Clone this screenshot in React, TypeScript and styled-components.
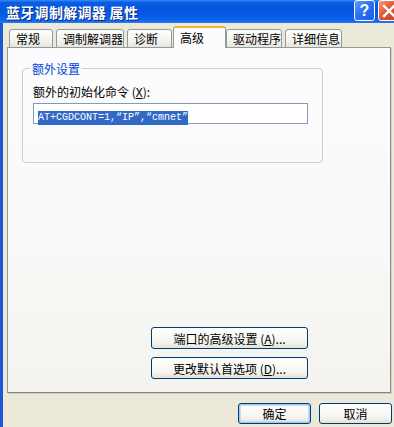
import styled, { createGlobalStyle } from 'styled-components';

const GlobalStyle = createGlobalStyle`
  html, body {
    margin: 0;
    padding: 0;
    background: #ece9d8;
  }
  body {
    font-family: "Noto Sans CJK SC", "Liberation Sans", sans-serif;
    font-size: 12px;
  }
`

const tabs = [
  { label: '常规', width: 44 },
  { label: '调制解调器', width: 68 },
  { label: '诊断', width: 45 },
  { label: '高级', width: 53, active: true },
  { label: '驱动程序', width: 56 },
  { label: '详细信息', width: 57 },
]

function App() {
  return (
    <>
      <GlobalStyle />
      <Window>
        <TitleBar>
          <TitleText>蓝牙调制解调器 属性</TitleText>
          <TitleButtons>
            <HelpBtn>?</HelpBtn>
            <CloseBtn>
              <svg width="14" height="14" viewBox="0 0 14 14">
                <path d="M2 2 L12 12 M12 2 L2 12" stroke="#fff" strokeWidth="2.4" strokeLinecap="square" />
              </svg>
            </CloseBtn>
          </TitleButtons>
        </TitleBar>
        <Frame>
          <Body>
            <TabStrip>
              {tabs.map((t) => (
                <Tab key={t.label} $active={!!t.active} $width={t.width}>
                  {t.label}
                </Tab>
              ))}
            </TabStrip>
            <Panel>
              <GroupBox>
                <Legend>额外设置</Legend>
                <FieldLabel>
                  额外的初始化命令 (<u>X</u>):
                </FieldLabel>
                <TextBox>
                  <Selected>AT+CGDCONT=1,“IP”,“cmnet”</Selected>
                </TextBox>
              </GroupBox>
              <ButtonColumn>
                <WideButton>
                  端口的高级设置 (<u>A</u>)...
                </WideButton>
                <WideButton>
                  更改默认首选项 (<u>D</u>)...
                </WideButton>
              </ButtonColumn>
            </Panel>
            <DialogButtons>
              <DlgButton $default>确定</DlgButton>
              <DlgButton>取消</DlgButton>
            </DialogButtons>
          </Body>
        </Frame>
      </Window>
    </>
  )
}

export default App;

const Window = styled.div`
  width: 394px;
  height: 427px;
  overflow: hidden;
  display: flex;
  flex-direction: column;
  background: #ece9d8;
`
const TitleBar = styled.div`
  height: 23px;
  flex: none;
  display: flex;
  align-items: center;
  justify-content: space-between;
  padding-left: 6px;
  background: linear-gradient(to bottom, #3a8cf6 0%, #0a5ee6 10%, #0455e0 45%, #0a62ec 85%, #2a78f4 100%);
`
const TitleText = styled.div`
  color: #fff;
  font-weight: bold;
  font-size: 14px;
  letter-spacing: 0.3px;
  text-shadow: 1px 1px 0 #0a2a7a;
`
const TitleButtons = styled.div`
  display: flex;
  gap: 3px;
  align-self: flex-start;
  margin-right: -5px;
`
const TitleBtnBase = styled.div`
  width: 19px;
  height: 19px;
  border: 1px solid #fff;
  border-radius: 3px;
  display: flex;
  align-items: center;
  justify-content: center;
  color: #fff;
`
const HelpBtn = styled(TitleBtnBase)`
  background: linear-gradient(135deg, #5a9cff 0%, #2a6ef0 50%, #1c5ee6 100%);
  font-family: "Liberation Sans", sans-serif;
  font-weight: bold;
  font-size: 16px;
`
const CloseBtn = styled(TitleBtnBase)`
  background: linear-gradient(135deg, #f39a78 0%, #e0542e 50%, #cc3e1c 100%);
`
const Frame = styled.div`
  flex: 1;
  display: flex;
  border-left: 3px solid #1b56d6;
`
const Body = styled.div`
  flex: 1;
  display: flex;
  flex-direction: column;
  padding: 4px 0 0 4px;
`
const TabStrip = styled.div`
  display: flex;
  align-items: flex-end;
  height: 21px;
  padding-left: 2px;
  gap: 3px;
  position: relative;
  z-index: 1;
  margin-bottom: -1px;
`
const Tab = styled.div<{ $active: boolean; $width: number }>`
  box-sizing: border-box;
  width: ${(p) => p.$width}px;
  height: ${(p) => (p.$active ? 22 : 19)}px;
  margin: ${(p) => (p.$active ? '0 -3px 0 -2px' : '0')};
  padding-left: 6px;
  padding-top: ${(p) => (p.$active ? 2 : 1)}px;
  border: 1px solid #919b9c;
  border-bottom: ${(p) => (p.$active ? 'none' : '1px solid #919b9c')};
  border-top: ${(p) => (p.$active ? '2px solid #f4b52c' : '1px solid #919b9c')};
  border-radius: 3px 3px 0 0;
  background: ${(p) => (p.$active ? '#fcfcfe' : 'linear-gradient(to bottom, #fff 0%, #f4f3ee 60%, #e6e5dd 100%)')};
  color: #000;
  font-size: 12px;
  line-height: 15px;
  white-space: nowrap;
  z-index: ${(p) => (p.$active ? 2 : 0)};
`
const Panel = styled.div`
  box-sizing: border-box;
  width: 384px;
  height: 346px;
  border: 1px solid #919b9c;
  border-right-color: #8a9092;
  border-bottom-color: #7f8586;
  background: linear-gradient(to bottom, #fcfcfe 0%, #f8f8f6 60%, #f4f3ee 100%);
  display: flex;
  flex-direction: column;
  padding: 15px 82px 13px 14px;
  box-shadow: 1px 1px 0 #d0cfc4;
`
const GroupBox = styled.div`
  position: relative;
  margin-top: 5px;
  height: 78px;
  border: 1px solid #d0d0bf;
  border-radius: 4px;
  padding: 15px 0 0 10px;
  margin-right: -15px;
`
const Legend = styled.div`
  position: absolute;
  top: -8px;
  left: 7px;
  padding: 0 2px;
  background: #fbfbfc;
  color: #0046d5;
  font-size: 12px;
  line-height: 15px;
`
const FieldLabel = styled.div`
  font-size: 12px;
  line-height: 15px;
  color: #000;
  u {
    text-underline-offset: 1px;
  }
`
const TextBox = styled.div`
  box-sizing: border-box;
  margin-top: 4px;
  width: 275px;
  height: 21px;
  border: 1px solid #7f9db9;
  background: #fff;
  padding: 2px 0 0 4px;
`
const Selected = styled.span`
  display: inline-block;
  background: #316ac5;
  color: #fff;
  font-family: "Liberation Mono", monospace;
  font-size: 10px;
  line-height: 14px;
  height: 14px;
`
const ButtonColumn = styled.div`
  margin-top: auto;
  display: flex;
  flex-direction: column;
  align-items: flex-end;
  gap: 8px;
`
const BtnBase = styled.div`
  box-sizing: border-box;
  height: 22px;
  border: 1px solid #003c74;
  border-radius: 3px;
  background: linear-gradient(to bottom, #ffffff 0%, #f5f4ef 70%, #e3e2da 100%);
  display: flex;
  align-items: center;
  justify-content: center;
  font-size: 12px;
  color: #000;
`
const WideButton = styled(BtnBase)`
  width: 157px;
  u {
    text-underline-offset: 1px;
  }
`
const DialogButtons = styled.div`
  display: flex;
  justify-content: flex-end;
  gap: 8px;
  margin-top: 10px;
  padding-right: 2px;
`
const DlgButton = styled(BtnBase)<{ $default?: boolean }>`
  width: 73px;
  height: 21px;
  box-shadow: ${(p) => (p.$default ? 'inset 0 0 0 1px #a8c6f0, inset 0 0 0 2px #c6dafa' : 'none')};
`
